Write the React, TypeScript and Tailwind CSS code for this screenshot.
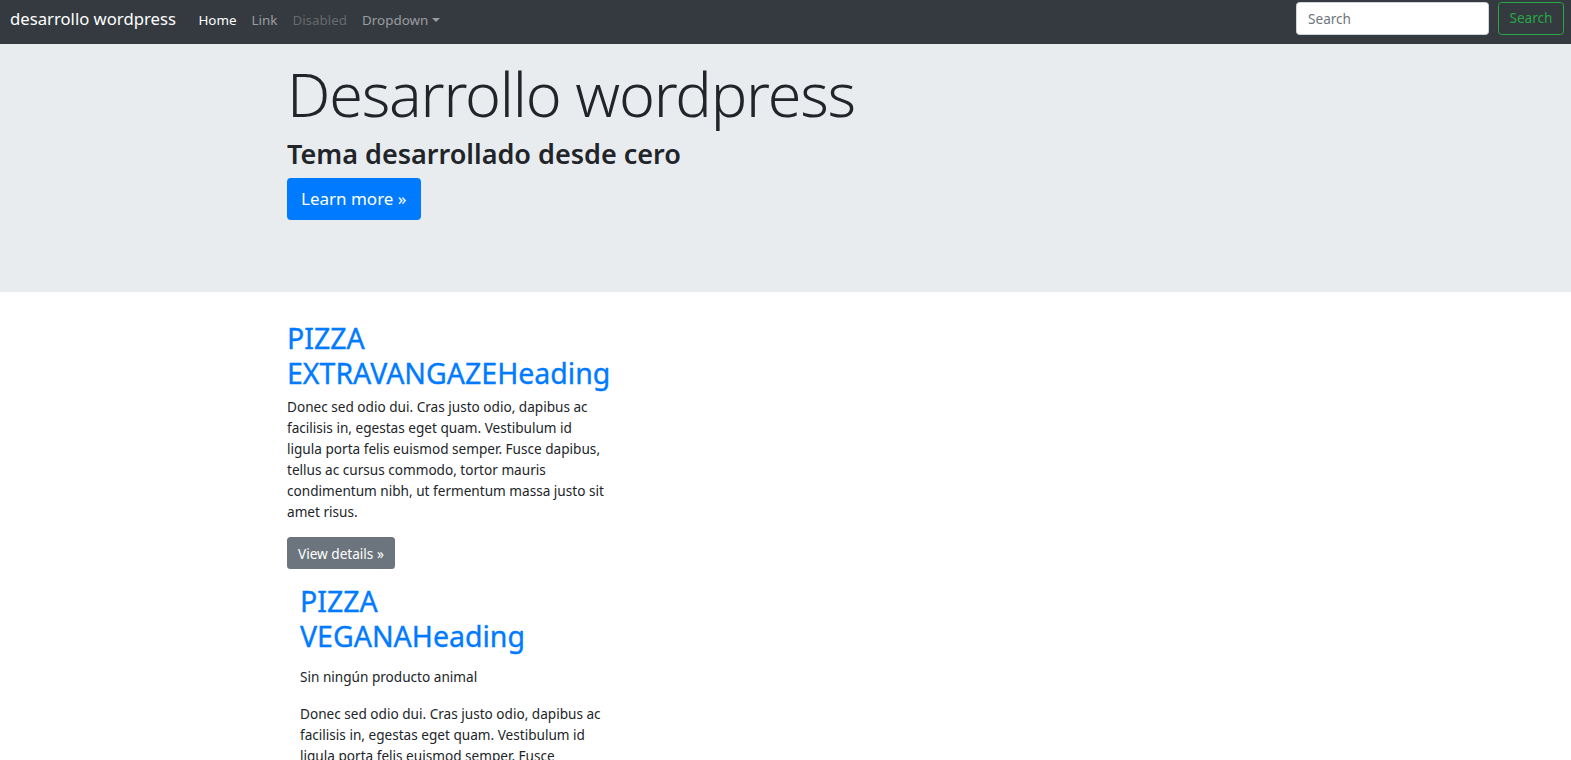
export default function App() {
  const font = "font-['Noto_Sans','Open_Sans',sans-serif]";
  const lorem =
    "Donec sed odio dui. Cras justo odio, dapibus ac facilisis in, egestas eget quam. Vestibulum id ligula porta felis euismod semper. Fusce dapibus, tellus ac cursus commodo, tortor mauris condimentum nibh, ut fermentum massa justo sit amet risus.";
  return (
    <div className={`${font} min-h-screen bg-white text-[#212529]`}>
      <nav className="flex h-[44px] items-start bg-[#343a40] pl-[10px] pr-[7px] pt-[2px]">
        <a className="mt-[7px] mr-[15px] text-[16.7px] leading-[20px] text-white">desarrollo wordpress</a>
        <ul className="mt-[8px] flex text-[13.4px] leading-[20px]">
          <li className="px-[7.5px] text-white">Home</li>
          <li className="px-[7.5px] text-white/50">Link</li>
          <li className="px-[7.5px] text-white/25">Disabled</li>
          <li className="flex items-center px-[7.5px] text-white/50">
            Dropdown
            <span className="ml-[4px] inline-block h-0 w-0 border-x-[4px] border-t-[4.5px] border-x-transparent border-t-white/50" />
          </li>
        </ul>
        <form className="ml-auto flex gap-[9px]">
          <input
            placeholder="Search"
            className="h-[33px] w-[193px] rounded-[3.5px] border border-[#ced4da] bg-white px-[11px] text-[13.6px] text-[#495057] placeholder:text-[#6c757d] outline-none"
          />
          <button className="h-[33px] w-[66px] rounded-[3.5px] border border-[#28a745] text-[13.6px] text-[#28a745]">
            Search
          </button>
        </form>
      </nav>

      <section className="h-[248px] bg-[#e9ecef]">
        <div className="ml-[287px] pt-[13px]">
          <h1 className="text-[61px] font-light leading-[1.2] tracking-[-1.2px] text-[#212529]">Desarrollo wordpress</h1>
          <p className="mt-[8px] text-[27px] font-semibold leading-[1.2]">Tema desarrollado desde cero</p>
          <a className="mt-[7px] inline-block rounded-[4px] bg-[#007bff] px-[14px] py-[7px] text-[17px] leading-[28px] text-white">
            Learn more »
          </a>
        </div>
      </section>

      <main className="ml-[287px] pt-[29px]">
        <div className="w-[320px]">
          <h2 className="text-[28.5px] leading-[35px] text-[#007bff] [-webkit-text-stroke:0.35px_#007bff]">
            PIZZA EXTRAVANGAZEHeading
          </h2>
          <p className="mt-[5px] text-[13.6px] leading-[21px]">{lorem}</p>
          <a className="mt-[15px] inline-block rounded-[3.5px] bg-[#6c757d] px-[11px] py-[5.5px] text-[13.6px] leading-[21px] text-white">
            View details »
          </a>
        </div>
        <div className="ml-[13px] w-[304px] pt-[15px]">
          <h2 className="text-[28.5px] leading-[34.5px] text-[#007bff] [-webkit-text-stroke:0.35px_#007bff]">
            PIZZA VEGANAHeading
          </h2>
          <p className="mt-[13px] text-[13.6px] leading-[21px]">Sin ningún producto animal</p>
          <p className="mt-[16px] text-[13.6px] leading-[21px]">{lorem}</p>
        </div>
      </main>
    </div>
  );
}
